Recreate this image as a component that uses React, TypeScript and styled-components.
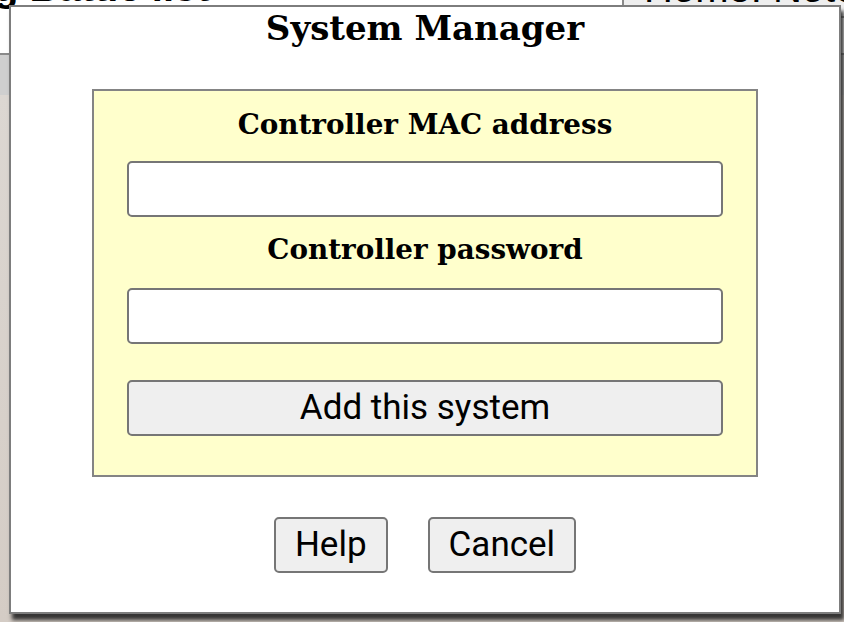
import React from "react";
import styled, { createGlobalStyle } from "styled-components";

const Global = createGlobalStyle`
  html, body { margin: 0; padding: 0; background: #ffffff; }
  body { width: 844px; height: 622px; overflow: hidden; }
  * { box-sizing: border-box; }
`;

const Page = styled.div`
  position: relative;
  width: 844px;
  height: 622px;
  overflow: hidden;
  display: flex;
  flex-direction: column;
  background: #ffffff;
`;

const TopBar = styled.div`
  display: flex;
  height: 55px;
  border-bottom: 2px solid #8a8a8a;
`;

const PageHeading = styled.div`
  flex: 1;
  margin-top: -33px;
  margin-left: -6px;
  font-family: "Liberation Sans", Arial, sans-serif;
  font-weight: 700;
  font-size: 40px;
  line-height: 40px;
  color: #000;
  white-space: nowrap;
  overflow: hidden;
`;

const HomeBox = styled.div`
  width: 222px;
  height: 18px;
  background: #eeeeee;
  border-left: 2px solid #8a8a8a;
  border-bottom: 2px solid #8a8a8a;
  overflow: hidden;
`;

const HomeText = styled.div`
  margin-top: -32px;
  padding-left: 20px;
  font-family: "Liberation Sans", Arial, sans-serif;
  font-size: 40px;
  line-height: 40px;
  color: #000;
  white-space: nowrap;
`;

const GreyBand = styled.div`
  height: 40px;
  background: #cfcfcf;
`;

const Backdrop = styled.div`
  flex: 1;
  background: linear-gradient(180deg, #dcd7d2 0%, #d4ccc5 100%);
`;

const Dialog = styled.div`
  position: absolute;
  left: 9px;
  top: 5px;
  width: 832px;
  height: 609px;
  background: #ffffff;
  border: 2px solid #7d7d7d;
  box-shadow: 3px 6px 4px rgba(35, 35, 35, 0.9);
  display: flex;
  flex-direction: column;
  align-items: center;
`;

const Title = styled.h1`
  margin: 1px 0 0 0;
  height: 40px;
  font-family: "DejaVu Serif", "Liberation Serif", serif;
  font-weight: 700;
  font-size: 34px;
  line-height: 40px;
  color: #000;
`;

const Panel = styled.div`
  margin-top: 41px;
  width: 666px;
  background: #ffffcc;
  border: 2px solid #848484;
  padding: 14px 33px 39px;
  display: flex;
  flex-direction: column;
  align-items: stretch;
`;

const Label = styled.label<{ $gap: number }>`
  display: block;
  margin-top: ${(p) => p.$gap}px;
  height: 40px;
  text-align: center;
  font-family: "DejaVu Serif", "Liberation Serif", serif;
  font-weight: 700;
  font-size: 27.8px;
  line-height: 40px;
  color: #000;
  white-space: nowrap;
`;

const TextInput = styled.input<{ $gap: number }>`
  display: block;
  margin-top: ${(p) => p.$gap}px;
  height: 56px;
  width: 100%;
  background: #ffffff;
  border: 2px solid #767676;
  border-radius: 5px;
  outline: none;
  padding: 0 10px;
  font-family: Roboto, sans-serif;
  font-size: 30px;
`;

const Button = styled.button`
  height: 56px;
  padding: 0 19px 1px;
  background: #efefef;
  border: 2px solid #767676;
  border-radius: 5px;
  font-family: Roboto, "Liberation Sans", sans-serif;
  font-size: 35px;
  line-height: 48px;
  color: #000;
  cursor: pointer;
`;

const WideButton = styled(Button)`
  margin-top: 36px;
  width: 100%;
`;

const ButtonRow = styled.div`
  margin-top: 40px;
  display: flex;
  gap: 40px;
  justify-content: center;
`;

export default function App() {
  return (
    <>
      <Global />
      <Page>
        <TopBar>
          <PageHeading>g Battle list</PageHeading>
          <HomeBox>
            <HomeText>Home. Notes</HomeText>
          </HomeBox>
        </TopBar>
        <GreyBand />
        <Backdrop />
        <Dialog role="dialog" aria-label="System Manager">
          <Title>System Manager</Title>
          <Panel>
            <Label $gap={0} htmlFor="mac">Controller MAC address</Label>
            <TextInput $gap={16} id="mac" type="text" />
            <Label $gap={13} htmlFor="pw">Controller password</Label>
            <TextInput $gap={18} id="pw" type="password" />
            <WideButton>Add this system</WideButton>
          </Panel>
          <ButtonRow>
            <Button>Help</Button>
            <Button>Cancel</Button>
          </ButtonRow>
        </Dialog>
      </Page>
    </>
  );
}
